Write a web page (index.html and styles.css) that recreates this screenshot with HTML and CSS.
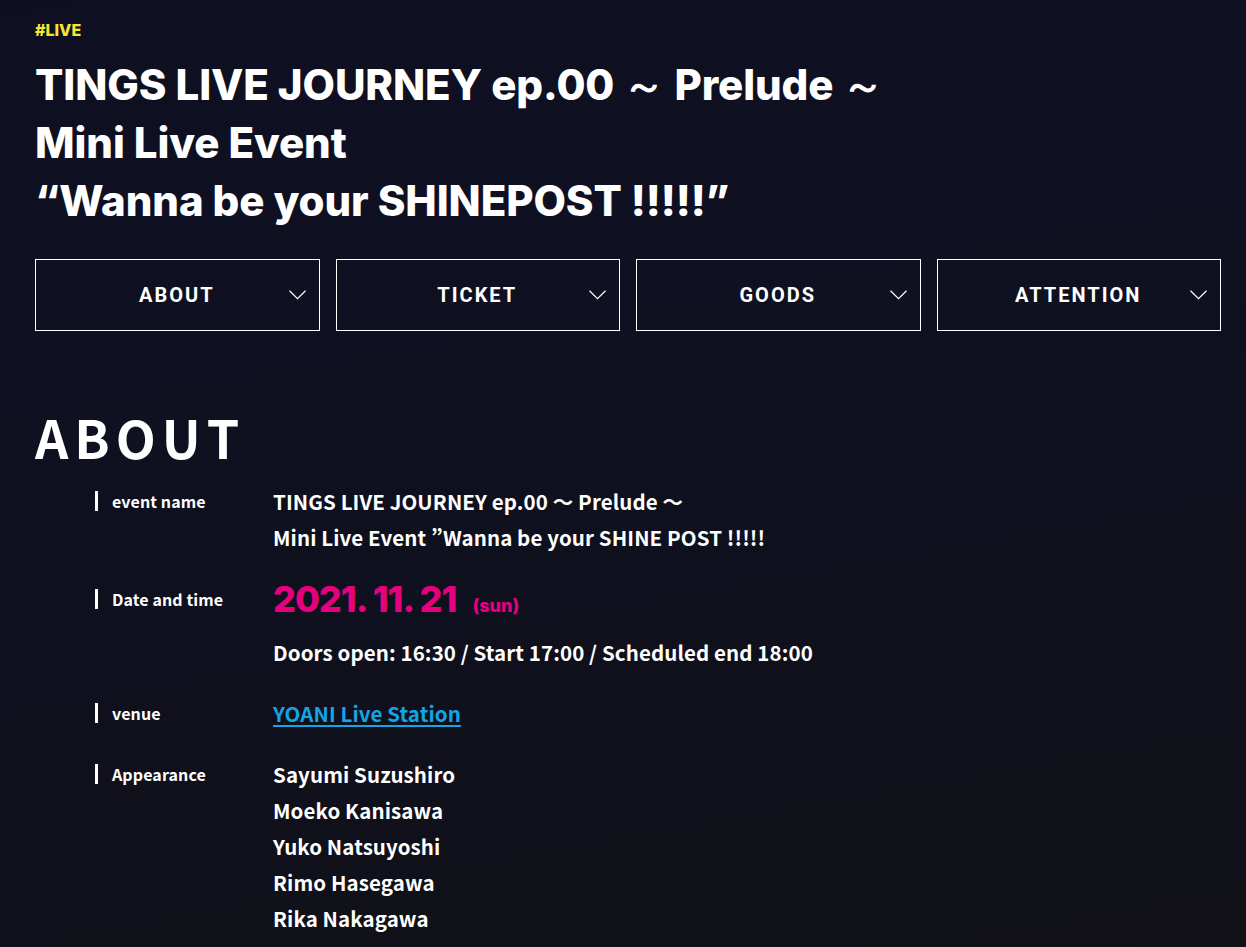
FILE: index.html
```html
<!DOCTYPE html>
<html lang="ja">
<head>
<meta charset="utf-8">
<title>TINGS LIVE JOURNEY ep.00</title>
<link rel="stylesheet" href="styles.css">
</head>
<body>
<main class="page">
  <p class="tag">#LIVE</p>
  <h1 class="title">TINGS LIVE JOURNEY ep.00 ～ Prelude ～<br>Mini Live Event<br>“Wanna be your SHINEPOST !!!!!”</h1>

  <nav class="tabs">
    <a class="tab" href="#about"><span>ABOUT</span><svg class="chev" width="17" height="10" viewBox="0 0 17 10"><path d="M0.5 0.8 L8.5 8.6 L16.5 0.8" fill="none" stroke="#fff" stroke-width="1.2"/></svg></a>
    <a class="tab" href="#ticket"><span>TICKET</span><svg class="chev" width="17" height="10" viewBox="0 0 17 10"><path d="M0.5 0.8 L8.5 8.6 L16.5 0.8" fill="none" stroke="#fff" stroke-width="1.2"/></svg></a>
    <a class="tab" href="#goods"><span>GOODS</span><svg class="chev" width="17" height="10" viewBox="0 0 17 10"><path d="M0.5 0.8 L8.5 8.6 L16.5 0.8" fill="none" stroke="#fff" stroke-width="1.2"/></svg></a>
    <a class="tab" href="#attention"><span>ATTENTION</span><svg class="chev" width="17" height="10" viewBox="0 0 17 10"><path d="M0.5 0.8 L8.5 8.6 L16.5 0.8" fill="none" stroke="#fff" stroke-width="1.2"/></svg></a>
  </nav>

  <section class="about" id="about">
    <h2 class="section-title">ABOUT</h2>
    <dl class="info">
      <div class="row">
        <dt class="label">event name</dt>
        <dd class="value">TINGS LIVE JOURNEY ep.00 〜 Prelude 〜<br>Mini Live Event ”Wanna be your SHINE POST !!!!!</dd>
      </div>
      <div class="row row-date">
        <dt class="label">Date and time</dt>
        <dd class="value">
          <div class="date">2021. 11. 21<span class="dow">(sun)</span></div>
          <div class="time">Doors open: 16:30 / Start 17:00 / Scheduled end 18:00</div>
        </dd>
      </div>
      <div class="row row-venue">
        <dt class="label">venue</dt>
        <dd class="value"><a class="link" href="#">YOANI Live Station</a></dd>
      </div>
      <div class="row">
        <dt class="label">Appearance</dt>
        <dd class="value">Sayumi Suzushiro<br>Moeko Kanisawa<br>Yuko Natsuyoshi<br>Rimo Hasegawa<br>Rika Nakagawa</dd>
      </div>
    </dl>
  </section>
</main>
</body>
</html>
```

FILE: styles.css
```css
* { box-sizing: border-box; }
html, body { margin: 0; padding: 0; }
body {
  background: linear-gradient(170deg, #0e0f22 0%, #0f1020 40%, #111117 100%);
  min-height: 947px;
  color: #fff;
  font-family: "Inter", "Liberation Sans", sans-serif;
  overflow: hidden;
}
.page {
  padding: 18px 25px 0 35px;
}
.tag {
  margin: 0;
  color: #f6e630;
  font-family: "Inter", sans-serif;
  font-weight: 800;
  font-size: 16px;
  line-height: 24px;
}
.title {
  margin: 14px 0 0;
  font-family: "Inter", sans-serif;
  font-weight: 800;
  font-size: 42px;
  line-height: 58px;
  letter-spacing: -0.1px;
}
.tabs {
  display: grid;
  grid-template-columns: repeat(4, 1fr);
  gap: 16px;
  margin-top: 29px;
}
.tab {
  position: relative;
  display: flex;
  align-items: center;
  justify-content: center;
  height: 72px;
  border: 1px solid #fff;
  color: #fff;
  text-decoration: none;
  font-family: "Roboto", sans-serif;
  font-weight: 700;
  font-size: 20px;
  letter-spacing: 2px;
}
.tab span { margin-left: -1px; margin-top: -1px; }
.chev {
  position: absolute;
  right: 13px;
  top: 30px;
}
.about { margin-top: 78px; }
.section-title {
  margin: 0;
  font-family: "Noto Sans CJK JP", "Noto Sans", sans-serif;
  font-weight: 700;
  font-size: 52px;
  line-height: 56px;
  letter-spacing: 6px;
}
.info { margin: 18px 0 0 60px; }
.row {
  display: flex;
  margin-bottom: 20px;
}
.label {
  width: 178px;
  flex: none;
  font-family: "Noto Sans CJK JP", sans-serif;
  font-weight: 700;
  font-size: 16px;
  line-height: 36px;
  padding-left: 17px;
  position: relative;
  letter-spacing: 0.1px;
}
.label::before {
  content: "";
  position: absolute;
  left: 0;
  top: 8px;
  width: 3px;
  height: 20px;
  background: #fff;
}
.value {
  margin: 0;
  font-family: "Noto Sans CJK JP", sans-serif;
  font-weight: 700;
  font-size: 20.5px;
  line-height: 36px;
  letter-spacing: 0.1px;
}
.row-date { margin-bottom: 25px; }
.row-date .label { margin-top: 6px; }
.row-venue { margin-bottom: 25px; }
.date {
  color: #e5007e;
  font-family: "Inter", sans-serif;
  font-weight: 800;
  font-size: 36px;
  line-height: 48px;
  letter-spacing: -1px;
}
.dow {
  font-size: 18px;
  margin-left: 16px;
  letter-spacing: 0;
}
.time { margin-top: 4px; }
.link {
  color: #12a6e6;
  text-decoration: underline;
  text-underline-offset: 3px;
  text-decoration-thickness: 2px;
}
```
